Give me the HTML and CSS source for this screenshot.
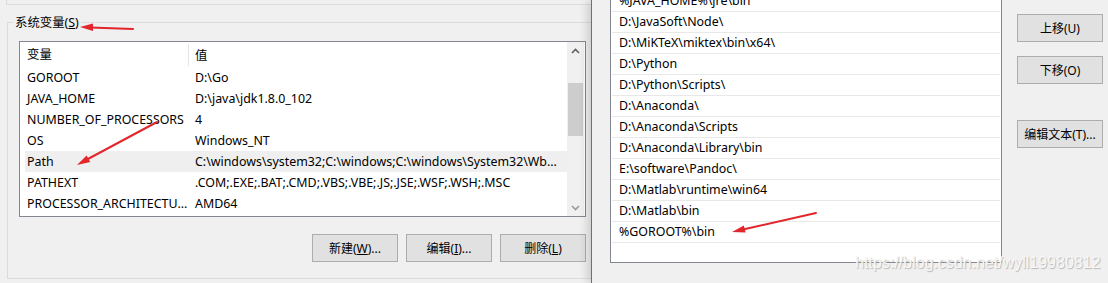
FILE: index.html
```html
<!doctype html>
<html>

<head>
	<title>环境变量</title>
	<link rel="stylesheet" href="styles.css">
</head>

<body>
	<div id='screen'>
		<div id='env-window'>
			<div id='user-group'></div>
			<fieldset id='system-group'>
				<legend>系统变量(<u>S</u>)</legend>
				<div id='var-list'>
					<div id='var-rows'>
						<div class='var-header'>
							<span class='col-name'>变量</span>
							<span class='col-value'>值</span>
						</div>
						<div class='var-row'><span class='col-name'>GOROOT</span><span class='col-value'>D:\Go</span></div>
						<div class='var-row'><span class='col-name'>JAVA_HOME</span><span class='col-value'>D:\java\jdk1.8.0_102</span></div>
						<div class='var-row'><span class='col-name'>NUMBER_OF_PROCESSORS</span><span class='col-value'>4</span></div>
						<div class='var-row'><span class='col-name'>OS</span><span class='col-value'>Windows_NT</span></div>
						<div class='var-row selected'><span class='col-name'>Path</span><span class='col-value'>C:\windows\system32;C:\windows;C:\windows\System32\Wbem;C:\windows\System32\WindowsPowerShell\v1.0\</span></div>
						<div class='var-row'><span class='col-name'>PATHEXT</span><span class='col-value'>.COM;.EXE;.BAT;.CMD;.VBS;.VBE;.JS;.JSE;.WSF;.WSH;.MSC</span></div>
						<div class='var-row'><span class='col-name'>PROCESSOR_ARCHITECTURE</span><span class='col-value'>AMD64</span></div>
					</div>
					<div class='scrollbar'>
						<div class='scroll-arrow'>
							<svg width='9' height='6' viewBox='0 0 9 6'><path d='M1 5 L4.5 1.5 L8 5' fill='none' stroke='#606060' stroke-width='1.6'/></svg>
						</div>
						<div class='scroll-track'><div class='scroll-thumb'></div></div>
						<div class='scroll-arrow'>
							<svg width='9' height='6' viewBox='0 0 9 6'><path d='M1 1 L4.5 4.5 L8 1' fill='none' stroke='#9a9a9a' stroke-width='1.6'/></svg>
						</div>
					</div>
				</div>
				<div class='button-row'>
					<button class='win-button'>新建(<u>W</u>)...</button>
					<button class='win-button'>编辑(<u>I</u>)...</button>
					<button class='win-button'>删除(<u>L</u>)</button>
				</div>
			</fieldset>
		</div>
		<div id='edit-window'>
			<div id='path-list'>
				<div class='path-row'>%JAVA_HOME%\jre\bin</div>
				<div class='path-row'>D:\JavaSoft\Node\</div>
				<div class='path-row'>D:\MiKTeX\miktex\bin\x64\</div>
				<div class='path-row'>D:\Python</div>
				<div class='path-row'>D:\Python\Scripts\</div>
				<div class='path-row'>D:\Anaconda\</div>
				<div class='path-row'>D:\Anaconda\Scripts</div>
				<div class='path-row'>D:\Anaconda\Library\bin</div>
				<div class='path-row'>E:\software\Pandoc\</div>
				<div class='path-row'>D:\Matlab\runtime\win64</div>
				<div class='path-row'>D:\Matlab\bin</div>
				<div class='path-row'>%GOROOT%\bin</div>
			</div>
			<div id='side-buttons'>
				<button class='win-button'>上移(U)</button>
				<button class='win-button'>下移(O)</button>
				<button class='win-button spaced'>编辑文本(T)...</button>
			</div>
		</div>
		<svg id='arrows' width='1108' height='283' viewBox='0 0 1108 283'>
			<g stroke='#e2262c' stroke-width='2' stroke-linecap='round' fill='none'>
				<line x1='133' y1='29' x2='90' y2='27.4'/>
				<line x1='157' y1='122' x2='87' y2='159.5'/>
				<line x1='816' y1='213' x2='744' y2='229.3'/>
			</g>
			<g fill='#e2262c'>
				<polygon points='80,27 93,23.5 93,31'/>
				<polygon points='77,165 90.3,162 86.6,155.6'/>
				<polygon points='732,232 745.6,232.6 743.8,225.6'/>
			</g>
		</svg>
		<div id='watermark'>https://blog.csdn.net/wyll19980812</div>
	</div>
</body>

</html>
```

FILE: styles.css
```css
html, body {
	margin: 0;
	padding: 0;
	width: 1108px;
	height: 283px;
	overflow: hidden;
	background-color: #f0f0f0;
	font-family: 'Noto Sans', 'Noto Sans CJK SC', sans-serif;
	font-size: 12.4px;
	color: #000;
}
#screen {
	position: relative;
	display: flex;
	height: 283px;
}

/* left dialog: environment variables */
#env-window {
	flex: none;
	width: 591px;
	overflow: hidden;
	background-color: #f0f0f0;
}
#user-group {
	margin-left: 6px;
	width: 640px;
	height: 4px;
	border-left: 1px solid #dcdcdc;
	border-bottom: 1px solid #dcdcdc;
}
#system-group {
	box-sizing: border-box;
	margin: 9px 0 0 7px;
	padding: 10px 0 0 11px;
	width: 660px;
	height: 265px;
	border: 1px solid #dcdcdc;
}
#system-group legend {
	padding: 0 2px;
	margin-left: -6px;
	line-height: 17px;
}
#var-list {
	box-sizing: border-box;
	display: flex;
	width: 567px;
	height: 176px;
	border: 1px solid #828790;
	background-color: #fff;
}
#var-rows {
	flex: 1;
	min-width: 0;
}
.var-header {
	display: flex;
	align-items: center;
	height: 25px;
	margin-left: 5px;
}
.var-header .col-name {
	border-right: 1px solid #e5e5e5;
	height: 22px;
	line-height: 22px;
}
.var-row {
	display: flex;
	align-items: center;
	height: 21px;
	margin-left: 5px;
}
.var-row.selected {
	background-color: #efefef;
}
.col-name {
	box-sizing: border-box;
	flex: none;
	width: 164px;
	padding-left: 2px;
	padding-right: 1px;
	white-space: nowrap;
	overflow: hidden;
	text-overflow: ellipsis;
}
.col-value {
	flex: 1;
	min-width: 0;
	padding-left: 6px;
	padding-right: 6px;
	white-space: nowrap;
	overflow: hidden;
	text-overflow: ellipsis;
}
.scrollbar {
	flex: none;
	display: flex;
	flex-direction: column;
	width: 17px;
	margin-right: 1px;
	background-color: #f0f0f0;
}
.scroll-arrow {
	display: flex;
	align-items: center;
	justify-content: center;
	height: 17px;
}
.scroll-track {
	flex: 1;
}
.scroll-thumb {
	margin: 24px 1px 0 1px;
	height: 53px;
	background-color: #cdcdcd;
}
.button-row {
	display: flex;
	justify-content: flex-end;
	gap: 8px;
	width: 567px;
	margin-top: 17px;
}
.win-button {
	box-sizing: border-box;
	width: 86px;
	height: 28px;
	padding: 0;
	border: 1px solid #adadad;
	background-color: #e1e1e1;
	font-family: inherit;
	font-size: 12px;
	color: #000;
}

/* right dialog: edit path */
#edit-window {
	flex: 1;
	display: flex;
	align-items: flex-start;
	padding-left: 18px;
	border-left: 1px solid #707070;
	background-color: #f0f0f0;
	box-shadow: -4px 0 8px rgba(0, 0, 0, 0.14);
}
#path-list {
	box-sizing: border-box;
	width: 392px;
	height: 273px;
	margin-top: -10px;
	border: 1px solid #828790;
	background-color: #fff;
}
.path-row {
	box-sizing: border-box;
	height: 21px;
	line-height: 20px;
	padding-left: 7px;
	margin: 0 1px;
	border-bottom: 1px solid #e8e8e8;
	white-space: nowrap;
}
#side-buttons {
	display: flex;
	flex-direction: column;
	gap: 14px;
	margin-left: 15px;
	padding-top: 14px;
}
#side-buttons .spaced {
	margin-top: 22px;
}

/* overlays */
#arrows {
	position: absolute;
	left: 0;
	top: 0;
	pointer-events: none;
}
#watermark {
	position: absolute;
	left: 855px;
	top: 254px;
	font-family: 'Liberation Sans', Arial, sans-serif;
	font-size: 16px;
	color: #f7f7f7;
	text-shadow: 1px 1px 1px #b8b8b8;
	white-space: nowrap;
}
```
